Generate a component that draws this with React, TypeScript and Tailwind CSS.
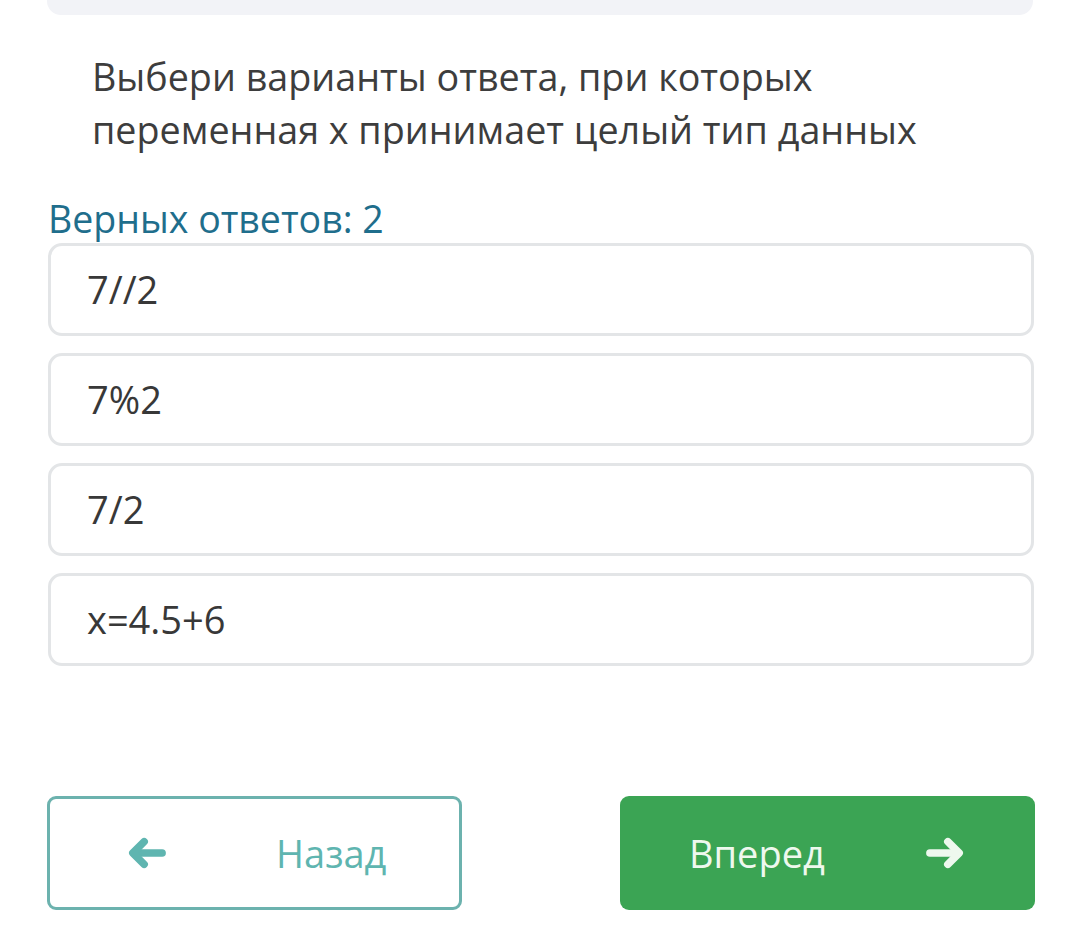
const options = ['7//2', '7%2', '7/2', 'x=4.5+6'];

function Arrow({ dir, className }: { dir: 'left' | 'right'; className?: string }) {
  return (
    <svg viewBox="0 0 40 36" className={className} fill="none" stroke="currentColor" strokeWidth={8} strokeLinecap="round" strokeLinejoin="round">
      {dir === 'left' ? (
        <>
          <path d="M36 18H8" />
          <path d="M17 6L5 18l12 12" />
        </>
      ) : (
        <>
          <path d="M4 18h28" />
          <path d="M23 6l12 12-12 12" />
        </>
      )}
    </svg>
  );
}

export default function App() {
  return (
    <div className="w-[1080px] h-[948px] bg-white overflow-hidden" style={{ fontFamily: '"Open Sans", "Liberation Sans", sans-serif' }}>
      <div className="px-[47px]">
        <div className="h-[15px] bg-[#f2f3f7] rounded-b-[14px]" />
      </div>
      <div className="pl-[92px] pr-[40px] pt-[35px] text-[37.7px] leading-[53px] text-[#3d3d3d]">
        Выбери варианты ответа, при которых
        <br />
        переменная x принимает целый тип данных
      </div>
      <div className="px-[48px] pt-[40px]">
        <div className="text-[37.5px] leading-[46px] text-[#1f6e8c]">Верных ответов: 2</div>
        <div className="mt-[1px] flex flex-col gap-[17px] w-[986px]">
          {options.map((o) => (
            <div key={o} className="h-[93px] border-[3px] border-[#e3e5e7] rounded-[14px] flex items-center pl-[36px] text-[38px] text-[#383838]">
              {o}
            </div>
          ))}
        </div>
      </div>
      <div className="pl-[47px] pr-[45px] pt-[130px] flex justify-between">
        <button className="w-[415px] h-[114px] border-[3px] border-[#6cb2ae] rounded-[9px] flex items-center pl-[78px] text-[38px] text-[#5fb5b0]">
          <Arrow dir="left" className="w-[38px] h-[34px]" />
          <span className="ml-[110px]">Назад</span>
        </button>
        <button className="w-[415px] h-[114px] bg-[#3ba454] rounded-[9px] flex items-center pl-[69px] text-[38px] text-[#eef8ee]">
          <span>Вперед</span>
          <Arrow dir="right" className="w-[40px] h-[34px] ml-[100px]" />
        </button>
      </div>
    </div>
  );
}
